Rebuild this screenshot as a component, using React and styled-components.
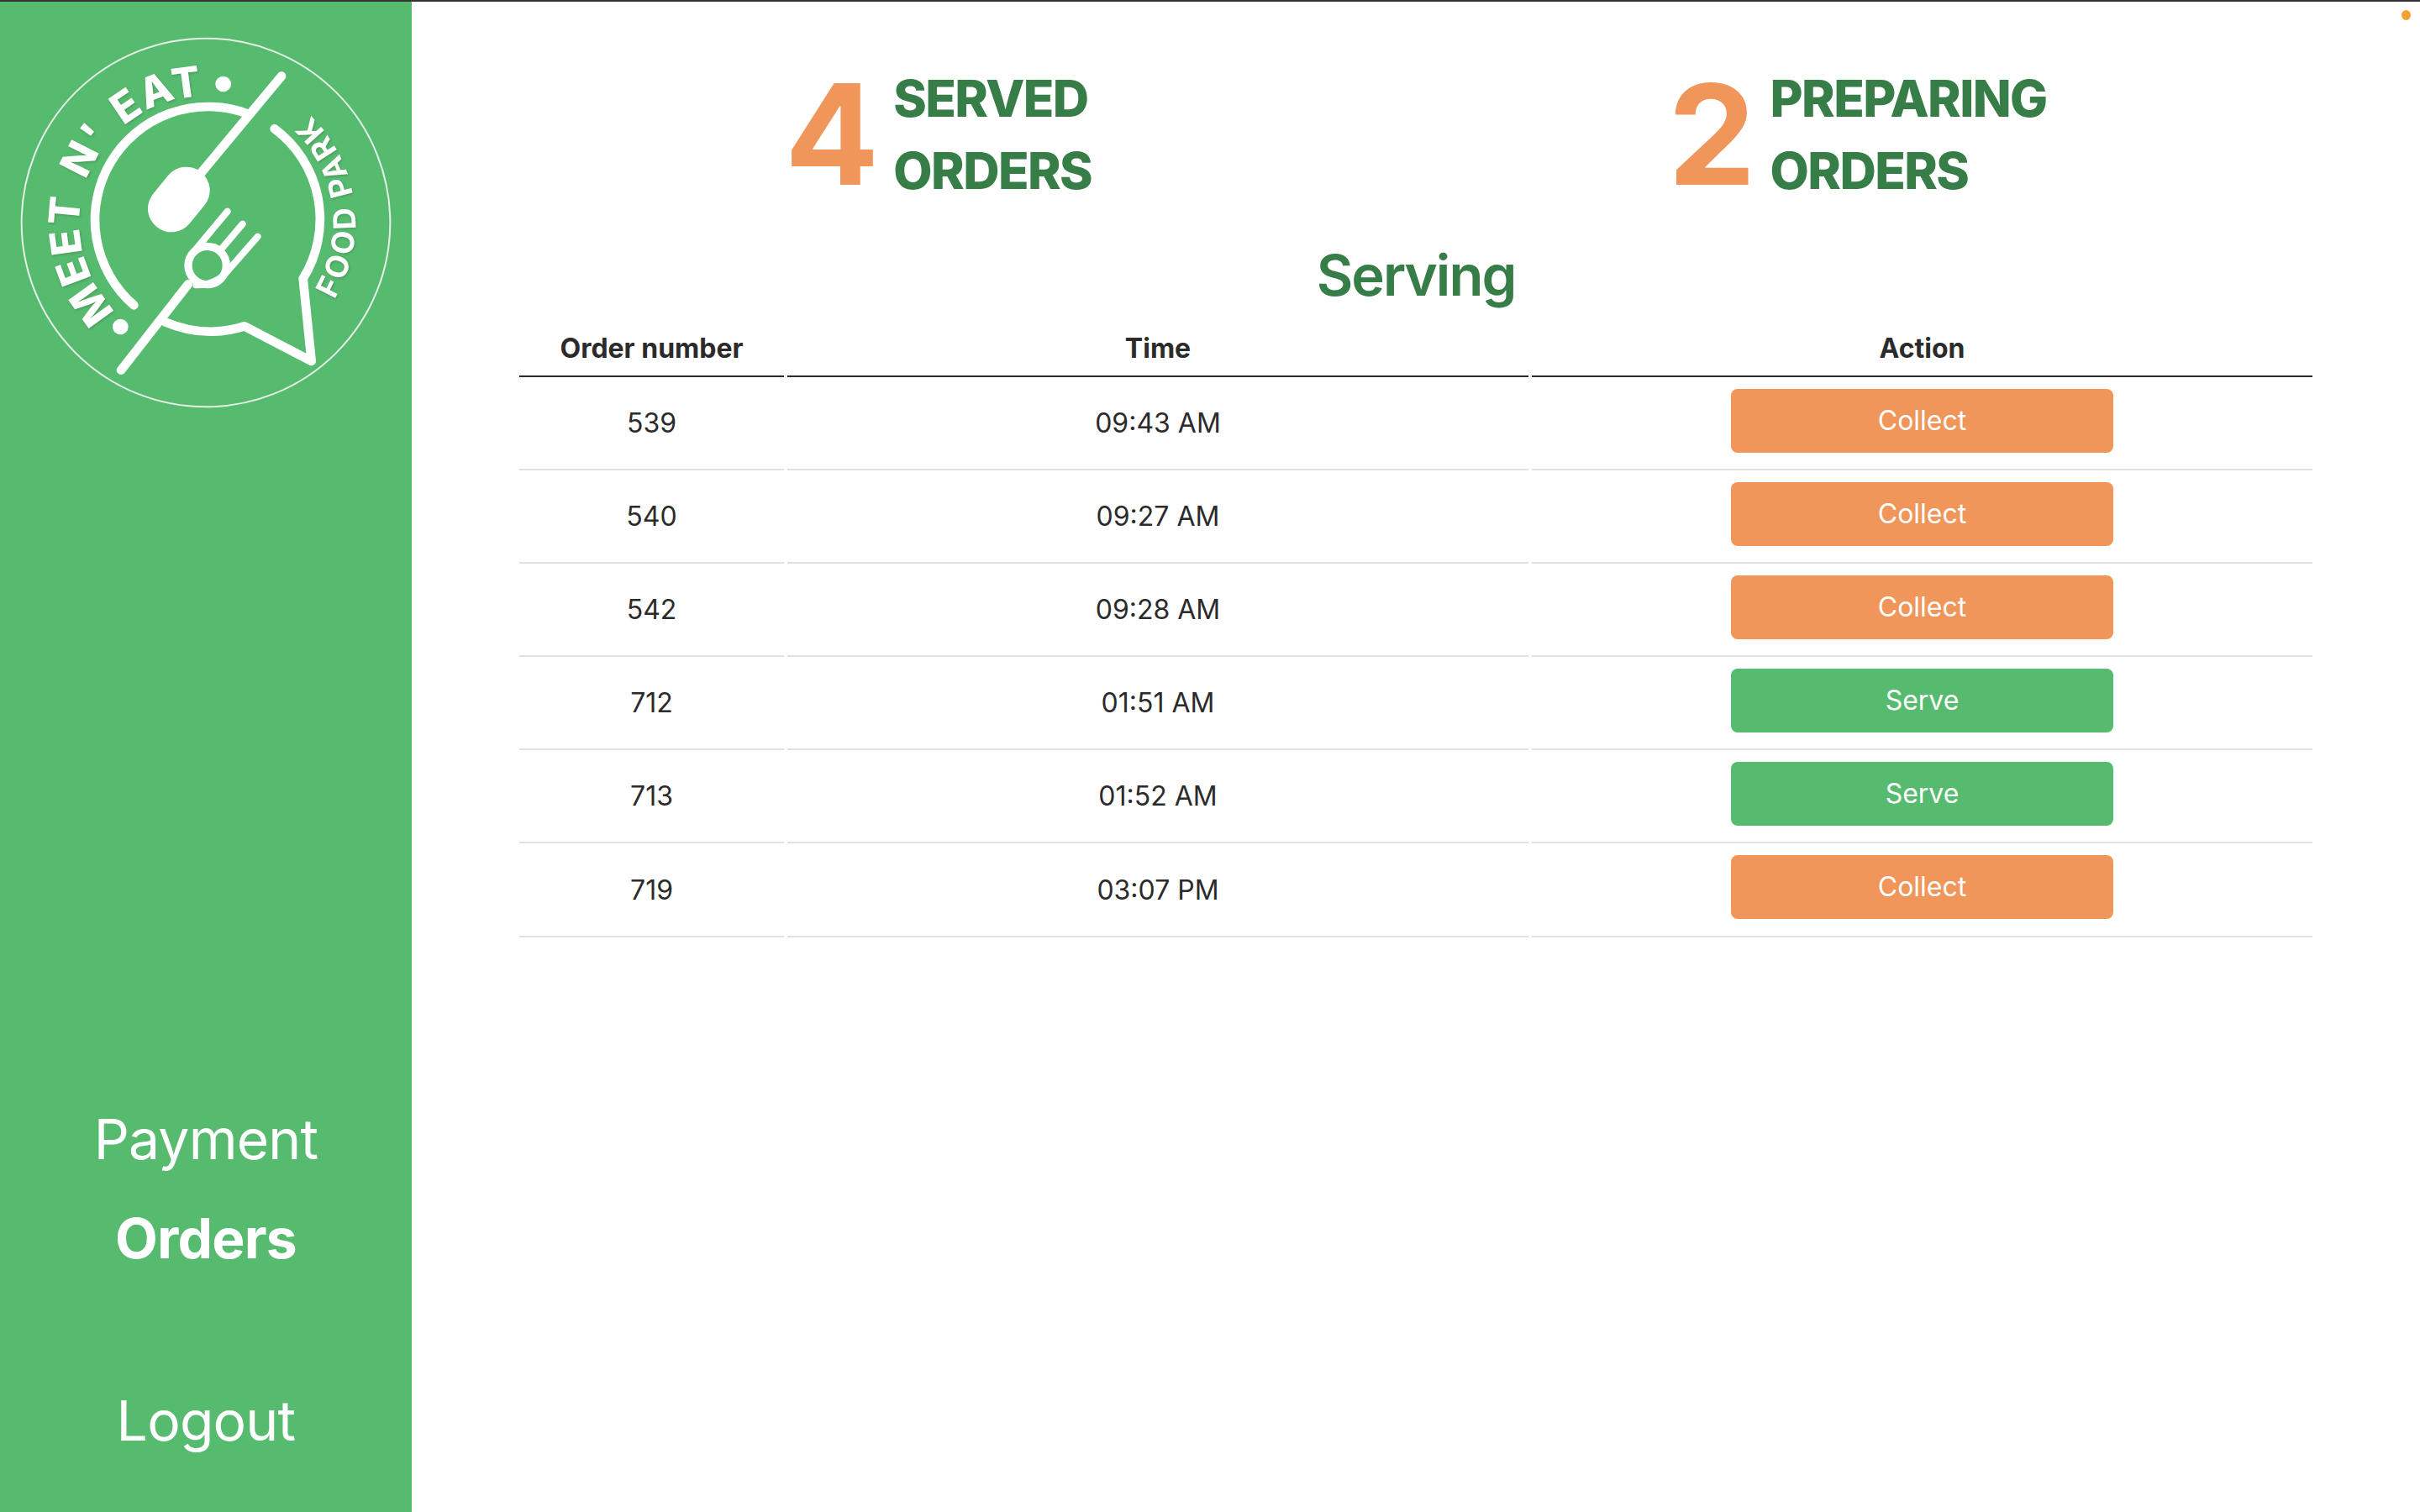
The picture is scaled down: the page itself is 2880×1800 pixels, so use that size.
import React from "react";
import styled, { createGlobalStyle } from "styled-components";

const GlobalStyle = createGlobalStyle`
  html, body {
    margin: 0;
    padding: 0;
    background: #fff;
    font-family: Inter, "Liberation Sans", sans-serif;
  }
`;

const GREEN = "#57bb6f";
const DARK_GREEN = "#367d48";
const ORANGE = "#f0965a";
const INK = "#2b2b2b";

const orders = [
  { id: 539, time: "09:43 AM", action: "Collect" },
  { id: 540, time: "09:27 AM", action: "Collect" },
  { id: 542, time: "09:28 AM", action: "Collect" },
  { id: 712, time: "01:51 AM", action: "Serve" },
  { id: 713, time: "01:52 AM", action: "Serve" },
  { id: 719, time: "03:07 PM", action: "Collect" },
];

const Page = styled.div`
  display: flex;
  position: relative;
  width: 2880px;
  height: 1800px;
  box-sizing: border-box;
  border-top: 2px solid #333;
  overflow: hidden;
`;

const Sidebar = styled.aside`
  display: flex;
  flex-direction: column;
  align-items: center;
  flex: 0 0 490px;
  background: ${GREEN};
  padding-bottom: 50px;
  box-sizing: border-box;
`;

const LogoSvg = styled.svg`
  display: block;
  width: 490px;
  height: 490px;
  margin-top: -2px;
`;

const LogoText = styled.text`
  fill: #fff;
  font-family: Inter, "Open Sans", sans-serif;
  font-weight: ${(p) => p.$weight};
  filter: drop-shadow(3px 4px 4px rgba(0, 0, 0, 0.18));
`;

const Nav = styled.nav`
  display: flex;
  flex-direction: column;
  align-items: center;
  margin-top: auto;
`;

const NavItem = styled.a`
  color: #fff;
  font-size: 66px;
  letter-spacing: -0.8px;
  line-height: 118px;
  font-weight: ${(p) => (p.$active ? 700 : 400)};
  margin-top: ${(p) => (p.$logout ? "99px" : "0")};
`;

const Main = styled.main`
  flex: 1;
  padding: 72px 124px 0;
  min-width: 0;
`;

const Stats = styled.div`
  display: grid;
  grid-template-columns: 1054px 1fr;
  height: 172px;
`;

const Stat = styled.div`
  display: flex;
  align-items: center;
  gap: 19px;
  padding-left: ${(p) => p.$left}px;
`;

const StatNumber = styled.div`
  color: ${ORANGE};
  font-size: 166px;
  font-weight: 700;
  letter-spacing: -2px;
  line-height: 172px;
`;

const StatLabel = styled.div`
  color: ${DARK_GREEN};
  font-size: 60px;
  font-weight: 800;
  letter-spacing: -1.6px;
  line-height: 86px;
`;

const Title = styled.h2`
  margin: 42px 0 25px;
  color: ${DARK_GREEN};
  font-size: 67px;
  font-weight: 600;
  letter-spacing: -2px;
  line-height: 80px;
  text-align: center;
`;

const Table = styled.table`
  width: 100%;
  table-layout: fixed;
  border-collapse: separate;
  border-spacing: 4px 0;
  color: ${INK};
  font-size: 32px;
`;

const Head = styled.th`
  width: ${(p) => p.$width || "auto"};
  padding: 2px 0 12px;
  border-bottom: 2px solid ${INK};
  font-weight: 700;
  line-height: 40px;
  text-align: center;
`;

const Cell = styled.td`
  padding: 0;
  height: 109.1px;
  border-bottom: 2px solid #dee2e6;
  text-align: center;
  vertical-align: middle;
`;

const ActionCell = styled(Cell)`
  padding: 14px 0 19.1px;
  height: auto;
`;

const ActionButton = styled.button`
  display: block;
  width: 455px;
  height: 76px;
  margin: 0 auto;
  border: 0;
  border-radius: 8px;
  background: ${(p) => (p.$serve ? GREEN : ORANGE)};
  color: #fff;
  font-family: inherit;
  font-size: 32px;
  line-height: 76px;
  padding: 0;
`;

const RecordingDot = styled.span`
  position: absolute;
  top: 10px;
  right: 11px;
  width: 11px;
  height: 12px;
  border-radius: 50%;
  background: #f5a033;
`;

const Logo = () => (
  <LogoSvg viewBox="0 0 1470 1470">
    <defs>
      <path id="logo-top" d="M 415 1112 A 450 450 0 0 1 885 370" />
      <path id="logo-side" d="M 1193 1070 A 535 535 0 0 0 1002 332" />
    </defs>
    <circle cx="735" cy="795" r="658" fill="none" stroke="#e6f1e8" strokeWidth="6" />
    <g fill="none" stroke="#fff" strokeLinecap="round" strokeLinejoin="round">
      <path d="M 478 1090 A 404 404 0 0 1 880 405" strokeWidth="32" />
      <path d="M 980 460 A 402 402 0 0 1 1082 995 L 1112 1290 L 872 1165 Q 730 1210 590 1150" strokeWidth="32" />
      <path d="M 1005 272 L 720 615" strokeWidth="32" />
      <path d="M 672 1015 L 432 1322" strokeWidth="32" />
      <path d="M 665 680 L 612 745" strokeWidth="168" />
      <path d="M 812 755 L 695 895" strokeWidth="24" />
      <path d="M 866 800 L 790 890" strokeWidth="24" />
      <path d="M 920 845 L 815 965 Q 770 1020 700 1018" strokeWidth="24" />
      <circle cx="740" cy="948" r="68" strokeWidth="28" />
    </g>
    <circle cx="797" cy="300" r="28" fill="#fff" />
    <circle cx="430" cy="1167" r="28" fill="#fff" />
    <LogoText $weight={800} fontSize="150" letterSpacing="5" wordSpacing="22">
      <textPath href="#logo-top">MEET N' EAT</textPath>
    </LogoText>
    <LogoText $weight={700} fontSize="110" letterSpacing="10">
      <textPath href="#logo-side">FOOD PARK</textPath>
    </LogoText>
  </LogoSvg>
);

export default function App() {
  return (
    <Page>
      <GlobalStyle />
      <Sidebar>
        <Logo />
        <Nav>
          <NavItem>Payment</NavItem>
          <NavItem $active>Orders</NavItem>
          <NavItem $logout>Logout</NavItem>
        </Nav>
      </Sidebar>
      <Main>
        <Stats>
          <Stat $left={320}>
            <StatNumber>4</StatNumber>
            <StatLabel>
              SERVED
              <br />
              ORDERS
            </StatLabel>
          </Stat>
          <Stat $left={317}>
            <StatNumber>2</StatNumber>
            <StatLabel>
              PREPARING
              <br />
              ORDERS
            </StatLabel>
          </Stat>
        </Stats>
        <Title>Serving</Title>
        <Table>
          <thead>
            <tr>
              <Head $width="315px">Order number</Head>
              <Head $width="882px">Time</Head>
              <Head>Action</Head>
            </tr>
          </thead>
          <tbody>
            {orders.map((o) => (
              <tr key={o.id}>
                <Cell>{o.id}</Cell>
                <Cell>{o.time}</Cell>
                <ActionCell>
                  <ActionButton $serve={o.action === "Serve"}>{o.action}</ActionButton>
                </ActionCell>
              </tr>
            ))}
          </tbody>
        </Table>
      </Main>
      <RecordingDot />
    </Page>
  );
}
